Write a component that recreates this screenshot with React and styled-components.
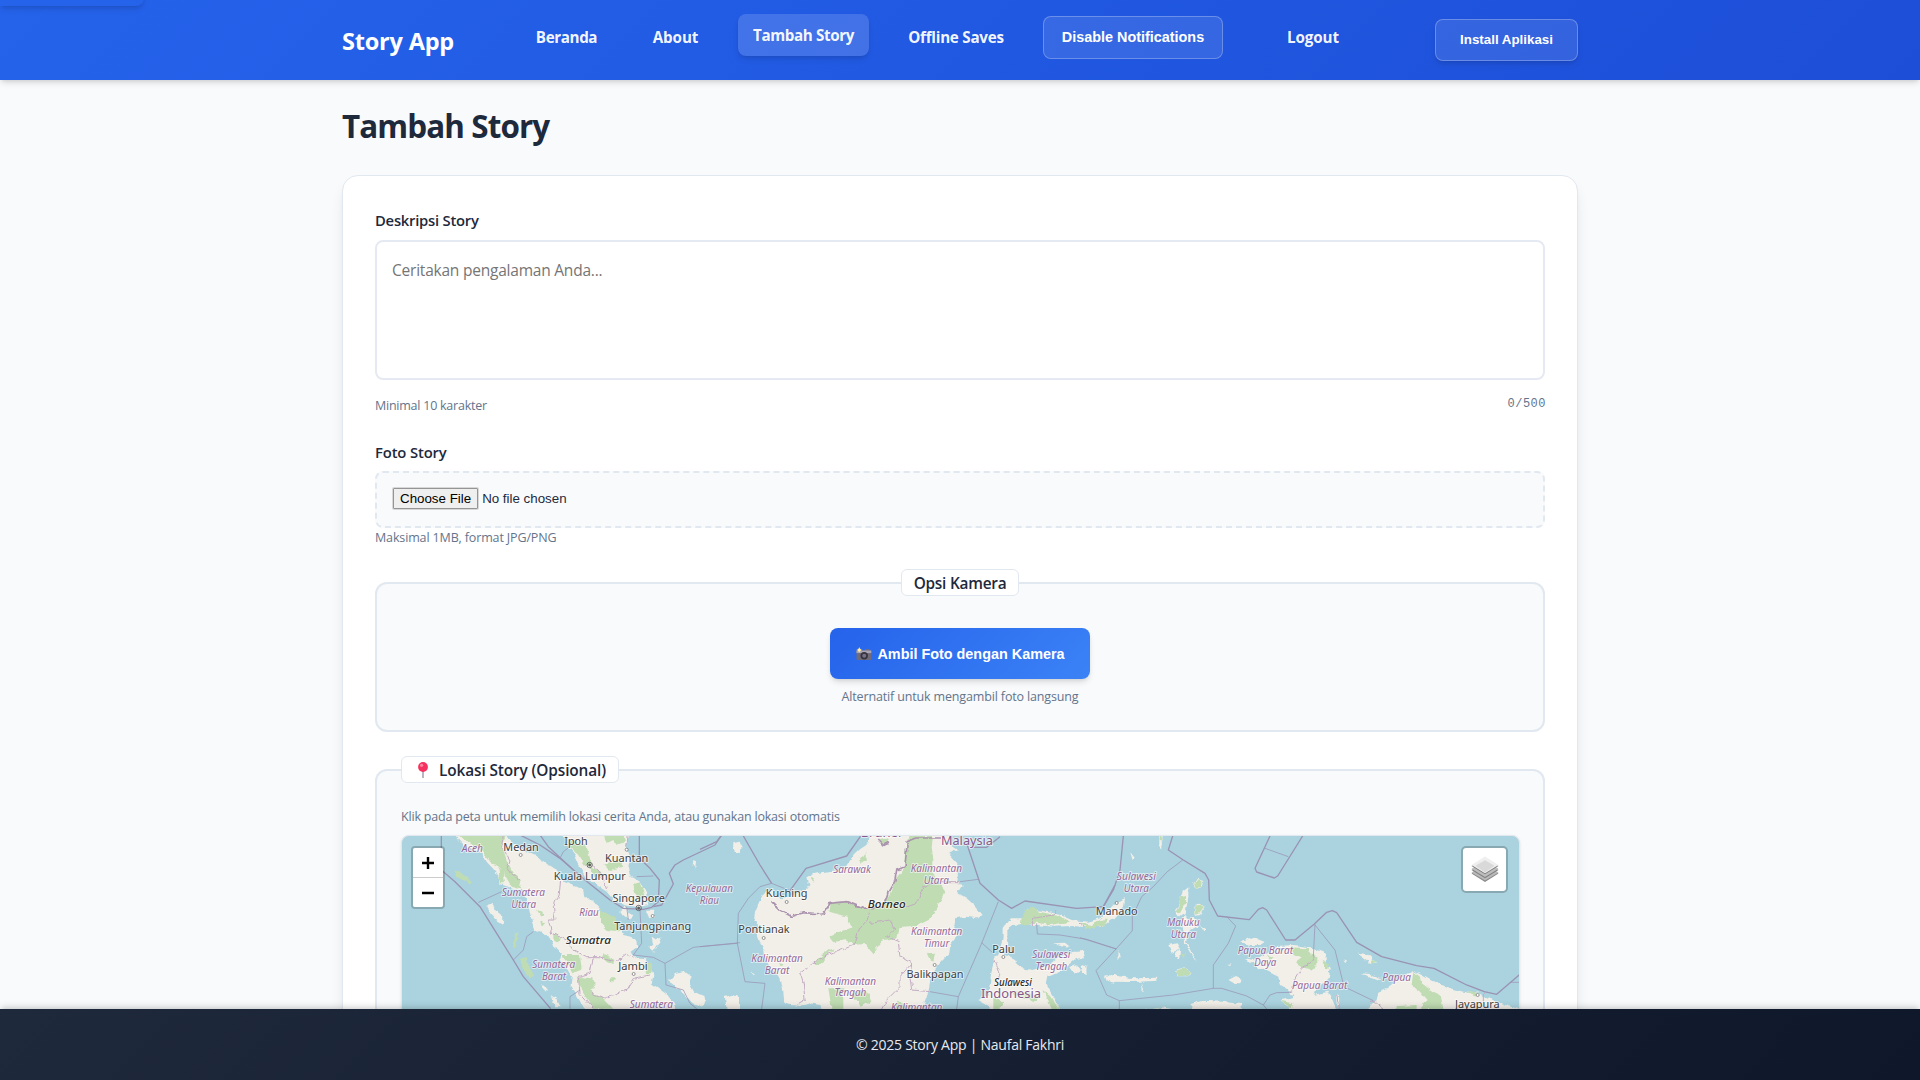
import React from "react";
import styled, { createGlobalStyle } from "styled-components";

const ui = `"Open Sans", "Noto Sans", sans-serif`;
const arial = `"Liberation Sans", Arial, sans-serif`;

const Global = createGlobalStyle`
  *, *::before, *::after { box-sizing: border-box; }
  html, body { margin: 0; padding: 0; overflow: hidden; }
  body { background: #f8fafc; color: #1e293b; font-family: ${ui}; }
`;

const Page = styled.div`
  position: relative;
  display: flex;
  flex-direction: column;
  height: 1080px;
  overflow: hidden;
`;

const SkipLink = styled.a`
  position: absolute;
  z-index: 5;
  top: -38px;
  left: 0;
  width: 144px;
  height: 44px;
  background: #2563eb;
  border-radius: 0 0 8px 0;
  box-shadow: 0 4px 6px -1px rgba(0, 0, 0, 0.12), 0 2px 4px -2px rgba(0, 0, 0, 0.1);
`;

const Header = styled.header`
  flex: none;
  position: relative;
  z-index: 2;
  height: 80px;
  background: linear-gradient(135deg, #2563eb 0%, #1d4ed8 100%);
  box-shadow: 0 4px 6px -1px rgba(0, 0, 0, 0.12), 0 2px 4px -2px rgba(0, 0, 0, 0.1);
`;

const HeaderInner = styled.div`
  display: flex;
  align-items: flex-start;
  width: 1236px;
  margin: 0 auto;
`;

const Brand = styled.div`
  width: 178px;
  padding-top: 23px;
  font-size: 23.5px;
  font-weight: 750;
  letter-spacing: -0.2px;
  line-height: 36px;
  color: #fff;
`;

const Nav = styled.nav`
  display: flex;
  gap: 24px;
  padding-top: 16px;
`;

const NavLink = styled.a`
  display: flex;
  align-items: center;
  justify-content: center;
  width: ${(p) => p.$w}px;
  height: 42px;
  border-radius: 8px;
  font-size: 15.2px;
  font-weight: 660;
  letter-spacing: ${(p) => p.$track ?? -0.2}px;
  color: rgba(255, 255, 255, 0.96);
  ${(p) => p.$active && `
    background: rgba(255, 255, 255, 0.15);
    transform: translateY(-2px);
    box-shadow: 0 4px 6px -1px rgba(0,0,0,.1), 0 2px 4px -2px rgba(0,0,0,.1);
  `}
`;

const GlassButton = styled.button`
  width: ${(p) => p.$w}px;
  height: 43px;
  padding: 0 0 1px;
  border: 1px solid rgba(255, 255, 255, 0.26);
  border-radius: 8px;
  background: rgba(255, 255, 255, 0.1);
  color: #fff;
  font: 700 14.4px ${arial};
  white-space: nowrap;
`;

const InstallButton = styled(GlassButton)`
  height: 42px;
  margin: 19px 0 0 auto;
  font-size: 13.33px;
  box-shadow: 0 4px 6px -1px rgba(0, 0, 0, 0.1), 0 2px 4px -2px rgba(0, 0, 0, 0.1);
`;

const Main = styled.main`
  flex: 1;
  min-height: 0;
  overflow: hidden;
`;

const Container = styled.div`
  width: 1236px;
  margin: 0 auto;
  padding-top: 22px;
`;

const Title = styled.h1`
  margin: 0 0 25px;
  font-size: 31.4px;
  font-weight: 680;
  letter-spacing: -0.9px;
  line-height: 48px;
`;

const Card = styled.section`
  padding: 32px;
  border: 1px solid #e2e8f0;
  border-radius: 16px;
  background: #fff;
  box-shadow: 0 10px 15px -3px rgba(0, 0, 0, 0.1), 0 4px 6px -4px rgba(0, 0, 0, 0.1);
`;

const Label = styled.label`
  display: block;
  height: ${(p) => p.$h}px;
  font-size: 14.8px;
  font-weight: 540;
  line-height: 24px;
  letter-spacing: ${(p) => p.$track}px;
`;

const Area = styled.textarea`
  display: block;
  width: 100%;
  height: 140px;
  padding: 15px 15px;
  border: 2px solid #e5eaf2;
  border-radius: 8px;
  background: #fff;
  color: #1e293b;
  font: 400 15.5px/26px ${ui};
  letter-spacing: -0.22px;
  resize: none;
  outline: none;
  &::placeholder { color: #757575; }
`;

const Hints = styled.div`
  display: flex;
  justify-content: space-between;
  height: 60px;
  padding-top: 15px;
`;

const Hint = styled.div`
  height: ${(p) => p.$h ?? 20}px;
  padding-top: ${(p) => p.$drop ?? 0}px;
  font-size: 12.5px;
  line-height: 20px;
  letter-spacing: ${(p) => p.$track}px;
  color: #64748b;
`;

const Counter = styled.div`
  font: 400 12px/18px "Liberation Mono", "DejaVu Sans Mono", monospace;
  letter-spacing: 0.5px;
  margin-right: -1px;
  color: #64748b;
`;

const FileInput = styled.input`
  display: block;
  width: 100%;
  height: 57px;
  padding: 15px;
  border: 2px dashed #e2e8f0;
  border-radius: 8px;
  background: #f8fafc;
  color: #1e293b;
  font: 400 13.33px ${arial};
  &::file-selector-button {
    height: 21px;
    margin: 0 4px 0 1px;
    padding: 1px 6px;
    border: 1px solid #959595;
    border-radius: 1px;
    background: #efefef;
    box-shadow: 0 0 0 1px #d8d8d8;
    color: #000;
    font: 400 13.33px ${arial};
  }
`;

const Group = styled.fieldset`
  min-width: 0;
  margin: 0 0 24px;
  padding: 0 24px 22px;
  border: 2px solid #e2e8f0;
  border-radius: 12px;
  background: #f8fafc;
`;

const Legend = styled.legend`
  display: flex;
  align-items: center;
  justify-content: center;
  width: ${(p) => p.$w}px;
  height: 27px;
  margin: ${(p) => (p.$center ? "0 auto" : "0")};
  padding: 2px 0 0;
  border: 1px solid #e2e8f0;
  border-radius: 6px;
  background: #fff;
  font-size: 15.4px;
  font-weight: 550;
  letter-spacing: ${(p) => p.$track}px;
  white-space: nowrap;
`;

const CameraBody = styled.div`
  display: flex;
  flex-direction: column;
  align-items: center;
  gap: 8px;
  padding-top: 32px;
`;

const CameraButton = styled.button`
  display: flex;
  align-items: center;
  justify-content: center;
  gap: 5px;
  width: 260px;
  height: 51px;
  padding: 1px 0 0 1px;
  border: 0;
  border-radius: 8px;
  background: linear-gradient(135deg, #2563eb, #3b82f6);
  box-shadow: 0 4px 6px -1px rgba(0, 0, 0, 0.12), 0 2px 4px -2px rgba(0, 0, 0, 0.1);
  color: #fff;
  font: 700 14.4px ${arial};
`;

const LocationBody = styled.div`
  padding-top: 24px;
`;

const Map = styled.div`
  position: relative;
  height: 400px;
  margin: 0 -1px 0 0;
  border: 1px solid #e2e8f0;
  border-radius: 8px;
  overflow: hidden;
  background: #aad3df;
  box-shadow: 0 1px 3px rgba(0, 0, 0, 0.1);
`;

const MapSvg = styled.svg`
  display: block;
  width: 1118px;
  height: 260px;
`;

const Zoom = styled.div`
  position: absolute;
  top: 10px;
  left: 9px;
  border: 2px solid rgba(0, 0, 0, 0.2);
  border-radius: 4px;
  background-clip: padding-box;
`;

const ZoomButton = styled.button`
  display: flex;
  align-items: center;
  justify-content: center;
  width: 30px;
  height: ${(p) => (p.$first ? 30 : 29)}px;
  padding: 0;
  border: 0;
  border-bottom: ${(p) => (p.$first ? "1px solid #ccc" : "0")};
  border-radius: ${(p) => (p.$first ? "2px 2px 0 0" : "0 0 2px 2px")};
  background: #fff;
`;

const Layers = styled.div`
  position: absolute;
  top: 10px;
  right: 11px;
  display: flex;
  align-items: center;
  justify-content: center;
  width: 47px;
  height: 47px;
  border: 2px solid rgba(0, 0, 0, 0.2);
  border-radius: 5px;
  background: #fff;
  background-clip: padding-box;
`;

const Footer = styled.footer`
  flex: none;
  position: relative;
  z-index: 2;
  display: flex;
  align-items: center;
  justify-content: center;
  height: 71px;
  background: linear-gradient(135deg, #1e293b 0%, #0f172a 100%);
  box-shadow: 0 -4px 6px -1px rgba(0, 0, 0, 0.12), 0 -2px 4px -2px rgba(0, 0, 0, 0.1);
  color: #e6eaf0;
  font-size: 14px;
  letter-spacing: -0.25px;
`;

const Place = styled.text`
  font-family: "Noto Sans", "Open Sans", sans-serif;
  font-size: ${(p) => (p.$kind === "country" ? 36 : p.$kind === "province" ? 32.5 : 34.5)}px;
  font-style: ${(p) => (p.$kind === "province" || p.$kind === "island" ? "italic" : "normal")};
  font-weight: ${(p) => (p.$kind === "island" ? 500 : 400)};
  fill: ${(p) => (p.$kind === "province" ? "#93699a" : p.$kind === "country" ? "#85588a" : p.$kind === "island" ? "#2a2a2a" : "#404040")};
  stroke: rgba(255, 255, 255, 0.6);
  stroke-width: 6px;
  stroke-linejoin: round;
  paint-order: stroke;
  text-anchor: middle;
`;

/* [text, centre x, baseline, width, kind] */
const west = [
  ["Aceh", 397, 397, 64, "province"],
  ["Medan", 543, 393, 106, "city"],
  ["Ipoh", 708, 374, 70, "city"],
  ["Kuantan", 860, 426, 130, "city"],
  ["Kuala Lumpur", 749, 479, 216, "city"],
  ["Singapore", 896, 545, 157, "city"],
  ["Tanjungpinang", 938, 631, 231, "city"],
  ["Jambi", 879, 750, 88, "city"],
  ["Sumatra", 745, 673, 136, "island"],
  ["Sumatera", 550, 528, 130, "province"],
  ["Utara", 551, 563, 74, "province"],
  ["Riau", 747, 589, 58, "province"],
  ["Kepulauan", 1108, 517, 142, "province"],
  ["Riau", 1108, 553, 58, "province"],
  ["Sumatera", 641, 745, 129, "province"],
  ["Barat", 642, 780, 72, "province"],
  ["Sumatera", 934, 865, 129, "province"],
];
const middle = [
  ["Brunei", 543, 82, 122, "country"],
  ["Malaysia", 801, 104, 156, "country"],
  ["Sarawak", 456, 188, 113, "province"],
  ["Kalimantan", 709, 185, 154, "province"],
  ["Utara", 709, 221, 75, "province"],
  ["Kuching", 260, 262, 125, "city"],
  ["Borneo", 560, 294, 114, "island"],
  ["Pontianak", 192, 370, 154, "city"],
  ["Kalimantan", 231, 456, 154, "province"],
  ["Barat", 231, 491, 74, "province"],
  ["Kalimantan", 710, 376, 154, "province"],
  ["Timur", 710, 412, 76, "province"],
  ["Balikpapan", 705, 503, 171, "city"],
  ["Kalimantan", 451, 524, 154, "province"],
  ["Tengah", 451, 559, 95, "province"],
  ["Kalimantan", 650, 603, 154, "province"],
  ["Palu", 910, 429, 66, "city"],
  ["Sulawesi", 1054, 445, 114, "province"],
  ["Tengah", 1054, 480, 95, "province"],
  ["Sulawesi", 939, 527, 114, "island"],
  ["Indonesia", 933, 565, 180, "country"],
];
const east = [
  ["Sulawesi", 169, 209, 117, "province"],
  ["Utara", 169, 245, 75, "province"],
  ["Manado", 110, 316, 126, "city"],
  ["Maluku", 310, 348, 98, "province"],
  ["Utara", 310, 384, 75, "province"],
  ["Papua Barat", 556, 432, 166, "province"],
  ["Daya", 556, 468, 66, "province"],
  ["Papua Barat", 719, 538, 166, "province"],
  ["Papua", 950, 513, 86, "province"],
  ["Jayapura", 1192, 595, 134, "city"],
];

const Places = ({ items }) =>
  items.map(([t, x, y, w, k], i) => (
    <Place key={i} x={x} y={y} textLength={w} lengthAdjust="spacingAndGlyphs" $kind={k}>
      {t}
    </Place>
  ));

const Poly = ({ list }) => list.map((p, i) => <polygon key={i} points={p} />);
const Lines = ({ list }) => list.map((p, i) => <polyline key={i} points={p} />);
const Town = ({ at }) =>
  at.map(([x, y], i) => <circle key={i} cx={x} cy={y} r="4.5" fill="#fff" stroke="#666" strokeWidth="2" />);
const Capital = ({ x, y }) => (
  <g fill="none" stroke="#555" strokeWidth="2.5">
    <circle cx={x} cy={y} r="8" />
    <circle cx={x} cy={y} r="3" fill="#555" />
  </g>
);

const WEST = "translate(340 720) scale(.33333)";
const MID = "translate(700 810) scale(.33333)";
const EAST = "translate(1080 810) scale(.33333)";

const landWest = [
  "340,340 360,362 375,378 400,385 425,403 440,425 460,447 478,470 478,492 505,500 520,508 545,510 560,535 570,580 577,610 582,632 610,640 630,655 640,680 665,700 660,720 680,745 695,770 692,795 705,815 720,840 740,880 1030,900 1005,860 990,830 965,812 935,790 940,765 930,740 918,715 880,712 872,695 892,680 888,660 872,650 850,645 840,625 815,622 790,605 780,570 752,535 730,535 726,505 700,498 672,485 655,455 625,435 590,408 545,388 510,365 495,340",
  "665,340 680,375 705,405 715,430 740,475 770,495 800,515 820,540 850,555 895,562 925,555 918,520 900,485 872,468 862,440 868,405 860,375 870,340",
  "985,782 1005,762 1035,755 1055,770 1048,790 1062,815 1090,828 1098,845 1075,858 1058,850 1040,830 1010,802",
  "1155,832 1180,824 1200,835 1200,875 1165,865",
  "438,558 458,552 472,575 490,590 488,612 468,600 452,582",
  "605,792 620,805 618,815 606,802", "632,825 650,838 662,862 648,862", "838,575 855,560 880,590 868,600", "915,572 945,572 945,592 925,595",
  "935,650 950,660 965,655 955,672 940,695 925,682 940,675", "1060,420 1068,424 1066,445 1058,438", "1180,375 1200,365 1200,400 1188,395",
];
const greenWest = [
  "345,340 500,340 485,375 500,420 520,460 545,480 540,505 515,500 480,440 455,430 430,400 400,375",
  "670,340 690,360 740,378 755,440 735,435 710,400 690,385", "790,340 850,340 855,365 830,375 820,360 800,370",
  "475,440 490,450 495,490 480,490", "342,455 360,457 395,483 390,490 350,470", "540,717 560,715 570,745 583,765 570,775 550,755",
  "780,570 820,590 845,635 800,630 780,610", "790,430 840,425 850,440 810,450", "880,495 900,490 915,530 890,540", "750,440 790,465 770,475 750,455",
  "640,640 660,655 655,670 640,660", "665,705 720,705 725,750 700,760 690,740", "710,770 760,775 765,800 745,810 790,835 820,866 760,866 730,820",
  "785,700 820,715 825,735 795,720", "915,725 935,730 935,760 918,760", "810,775 828,775 825,785 808,783", "525,640 535,640 528,685 520,680", "590,570 610,580 605,590", "600,600 615,610 605,620",
];
const landMid = [
  "518,60 505,98 480,115 462,132 440,168 420,180 365,186 340,192 322,200 328,225 318,238 275,256 240,268 218,245 195,243 180,270 165,305 162,330 178,345 172,370 178,395 192,418 198,450 212,475 235,495 245,530 250,575 275,585 300,588 330,580 360,585 380,640 650,640 672,580 685,545 690,520 688,500 705,478 720,460 748,430 752,400 775,372 760,345 765,325 800,320 830,325 848,315 828,290 800,265 775,250 788,228 770,205 772,160 745,130 775,120 745,100 760,60",
  "870,590 835,570 865,555 870,520 875,480 885,445 897,425 908,385 908,355 930,325 968,325 985,295 1040,305 1080,315 1115,330 1165,335 1200,325 1225,300 1250,275 1275,265 1272,290 1240,325 1205,350 1165,352 1120,348 1060,350 1010,345 970,342 940,345 922,360 922,400 915,435 945,450 962,475 1000,480 1040,468 1080,440 1120,425 1148,425 1152,445 1120,452 1080,485 1045,500 1040,525 1060,560 1078,600 1090,640 850,640",
  "100,100 118,95 128,115 112,130 100,118", "75,560 112,558 118,580 110,610 80,600", "0,562 15,580 0,590", "152,488 166,492 158,496",
  "1110,470 1130,462 1140,478 1125,492", "1140,478 1158,478 1160,495 1145,490", "1215,500 1245,495 1260,505 1240,518 1220,512", "1060,400 1095,398 1110,410 1080,405", "1255,420 1262,440 1256,450",
];
const greenMid = [
  "625,78 700,78 695,110 700,150 700,200 735,240 722,272 690,325 640,350 598,355 592,385 545,395 518,430 495,402 462,405 440,390 400,397 385,378 455,352 440,320 388,305 392,280 440,275 490,297 545,290 570,250 585,210 612,175 615,130",
  "978,298 1000,290 1020,305 1075,318 1110,335 1050,345 1010,338 965,348 968,320", "1135,335 1175,345 1200,330 1225,325 1210,348 1165,355",
  "345,455 372,430 400,415 398,425 372,440 370,462 342,462", "385,535 430,535 430,600 395,597", "455,550 500,540 515,570 480,592", "540,90 570,85 560,105 545,105", "480,145 500,130 500,150 485,158",
  "330,200 345,205 340,215", "680,430 705,428 700,455 690,450", "590,575 640,590 590,597", "1030,540 1050,555 1078,600 1055,597", "880,560 910,575 900,597 880,597", "930,545 1015,555 1010,575 960,560", "232,460 250,462 245,470",
];
const landEast = [
  "325,232 308,245 298,275 286,305 298,322 310,312 325,330 340,320 355,345 330,360 318,395 335,425 350,455 330,425 312,392 303,340 318,300 325,262",
  "340,222 352,204 370,210 365,232 350,240", "340,295 355,278 374,290 360,312 345,315",
  "265,405 290,400 300,418 275,430", "290,425 300,420 298,445 285,440", "78,495 110,498 160,505 235,503 232,512 160,516 90,515", "182,520 192,545 185,540", "285,480 310,473 335,488 330,496 290,496",
  "445,510 468,498 490,508 480,520 460,518", "150,125 165,145 158,150", "235,80 248,78 243,120 235,108", "480,395 515,382 550,395 545,405 510,405", "495,445 520,450 530,458 510,460",
  "525,450 565,425 590,408 640,405 690,412 740,432 740,455 752,475 745,510 705,540 700,555 745,545 760,575 775,620 640,640 625,590 600,572 640,560 630,545 600,525 595,500 565,485 528,470",
  "768,552 778,560 776,595 770,580", "830,428 862,432 882,452 892,458 870,458", "835,490 870,492 905,505 895,508", "440,462 458,460 448,466",
  "335,582 370,572 430,575 480,582 490,640 330,640", "200,597 240,590 275,597 275,620 205,620",
  "855,640 862,600 890,570 895,545 920,535 965,500 1000,483 1025,495 1055,512 1110,535 1150,545 1200,552 1250,575 1320,600 1330,640",
  "360,345 382,360 370,360", "790,445 800,450 795,458", "0,420 10,425 5,450 -2,440", "5,465 20,470 18,495 8,490",
];
const greenEast = [
  "342,222 354,206 368,212 362,230 350,238", "342,297 356,282 372,290 358,308 345,312", "302,262 318,258 318,275 300,310 290,305", "285,482 310,475 334,488 328,495 292,495",
  "635,412 680,415 690,432 712,440 712,462 700,480 665,472 645,460 665,445 640,435", "725,450 748,460 745,478 735,472", "558,435 578,440 570,450",
  "1000,484 1020,500 1025,520 1060,545 1082,555 1090,597 1020,597 1040,570 1020,545 995,525", "950,588 1010,585 1010,600 950,600", "870,448 892,455 875,460",
  "237,80 246,80 244,95 236,92", "1160,545 1190,550 1185,558", "600,572 640,580 635,595", "300,432 318,430 314,440", "200,597 240,592 250,600",
];

const MapArt = () => (
  <MapSvg viewBox="402 836 1118 260" aria-hidden="true">
    <defs>
      <filter id="coast" x="-5%" y="-5%" width="110%" height="110%">
        <feTurbulence type="fractalNoise" baseFrequency="0.16" numOctaves="2" seed="4" />
        <feDisplacementMap in="SourceGraphic" scale="5" xChannelSelector="R" yChannelSelector="G" />
      </filter>
    </defs>
    <g filter="url(#coast)">
      <g fill="#f2efe9">
        <g transform={WEST}><Poly list={landWest} /></g>
        <g transform={MID}><Poly list={landMid} /></g>
        <g transform={EAST}><Poly list={landEast} /></g>
      </g>
      <g fill="#bfdcb2">
        <g transform={WEST}><Poly list={greenWest} /></g>
        <g transform={MID}><Poly list={greenMid} /></g>
        <g transform={EAST}><Poly list={greenEast} /></g>
      </g>
      <g fill="none" stroke="#c3abc3" strokeWidth="3">
        <g transform={WEST}>
          <Lines list={[
            "490,340 485,380 510,420 500,450 540,480", "660,470 655,520 640,560 645,600 625,600 635,640 680,660 700,690 740,710 780,710 830,725 860,700 880,715",
            "760,715 750,760 715,770 720,820 760,866", "930,765 880,775 860,810 800,835 750,820", "760,440 790,475 800,510", "865,340 860,380",
          ]} />
        </g>
        <g transform={MID}>
          <Lines list={[
            "510,300 500,335 470,370 462,405 400,430 350,450 300,490 310,520 315,570 290,585", "510,340 570,330 585,360 560,380 595,395 600,440 635,460 600,500 600,530 560,570 545,597",
            "610,295 650,280 670,230 720,215 780,215", "635,460 630,500 635,540 690,545", "885,450 900,490 895,510", "1000,345 1000,325 1060,315 1075,295", "1135,335 1155,350",
          ]} />
        </g>
        <g transform={EAST}>
          <Lines list={["700,440 690,460 665,475 645,510 635,545", "870,570 890,580 910,595", "770,555 778,597", "1213,545 1213,600"]} />
        </g>
      </g>
      <g fill="none" stroke="#ab93ae" strokeWidth="5">
        <g transform={MID}>
          <polyline points="215,275 240,300 275,320 310,308 370,312 390,280 440,275 490,295 550,290 565,245 585,210 590,180 615,170 622,95 650,84 720,84" />
          <polyline points="535,90 550,106 570,95" />
        </g>
      </g>
    </g>
    <g fill="none" stroke="#9a93b3" strokeLinejoin="round">
      <g transform={WEST}>
        <g strokeWidth="4">
          <Lines list={[
            "304,340 304,450 345,485 420,560 520,720 550,770 632,866", "540,345 600,375 660,415 735,480 810,540 850,565 910,568 935,562 955,545 958,480 930,445 898,415 898,340",
            "600,345 625,380 700,450", "1145,345 1125,375 1030,420 1005,435 988,460 1000,492 965,555 940,560",
          ]} />
        </g>
        <g strokeWidth="2.2">
          <Lines list={["415,547 485,515", "520,720 550,690 560,650 580,635", "660,415 670,395 690,380", "890,470 940,468", "860,560 865,600", "900,570 905,670 880,705 940,712 975,730 1060,682 1200,668", "975,730 978,795 1030,810 1050,850 1070,866", "690,866 690,830 720,810"]} />
        </g>
      </g>
      <g transform={MID}>
        <g strokeWidth="4">
          <Lines list={["0,118 50,95 65,75", "130,78 180,165 215,220", "270,242 318,175 440,138 482,78", "800,100 840,220 895,270 935,295 975,273 1130,295 1210,290 1240,240 1245,225", "820,112 860,112 900,80"]} />
        </g>
        <g strokeWidth="2.2">
          <Lines list={["215,220 270,242", "215,220 180,230 145,265 115,310 112,400 135,515 195,520 185,597", "0,410 112,400", "780,215 835,208", "895,275 845,400 775,560 770,597", "690,545 775,560", "845,398 880,430", "1010,340 1012,372 1080,375 1160,388 1250,417"]} />
        </g>
      </g>
      <g transform={EAST}>
        <g strokeWidth="4">
          <Lines list={[
            "70,290 105,225 120,180 130,78", "278,78 265,120 310,150 375,190 386,210 388,270 413,318 508,329 535,298 548,293 560,300 617,390 645,390 703,342 740,307 757,302 770,308 830,397 905,440 1010,467 1062,475 1160,525 1213,545 1250,553 1320,493",
            "570,78 525,175 530,186 583,204 593,198 668,78",
          ]} />
        </g>
        <g strokeWidth="2.2">
          <Lines list={["308,150 262,185 220,230 185,260 157,320 157,362 108,417 48,482 80,555 118,572 118,597", "0,383 108,417", "555,115 625,140", "440,320 467,348 445,400 400,465 400,535 280,555 118,572", "400,535 425,535 500,558 550,585 570,555 590,548 635,547", "705,342 700,440", "705,345 765,420 792,530 880,572", "550,585 560,597", "1290,517 1320,517"]} />
        </g>
      </g>
    </g>
    <g transform={WEST}>
      <Town at={[[542, 405], [860, 389], [938, 588], [881, 762]]} />
      <Capital x={749} y={435} />
      <Capital x={896} y={564} />
      <Places items={west} />
    </g>
    <g transform={MID}>
      <Town at={[[260, 276], [191, 384], [704, 465], [910, 441]]} />
      <Places items={middle} />
    </g>
    <g transform={EAST}>
      <Town at={[[110, 279], [1193, 555]]} />
      <Places items={east} />
    </g>
  </MapSvg>
);

const Camera = () => (
  <svg width="16" height="14" viewBox="0 0 16 14" aria-hidden="true">
    <rect x="9" y="2.2" width="4.5" height="2" fill="#74707c" />
    <rect x="0.5" y="3.5" width="14.8" height="9.5" rx="0.8" fill="#6f6b78" />
    <rect x="0.5" y="3.5" width="14.8" height="2.6" fill="#aaa5b2" />
    <circle cx="8.2" cy="8.8" r="3.7" fill="#36333d" />
    <circle cx="8.2" cy="8.8" r="2" fill="#767088" />
    <path d="M3.3 0l.9 2 2 .9-2 .9-.9 2-.9-2-2-.9 2-.9z" fill="#ffd75e" />
    <circle cx="3.3" cy="2.9" r="1.5" fill="#ffedb0" />
  </svg>
);

const PinSvg = styled.svg`
  margin: -2px 9px 0 2px;
`;

const Pin = () => (
  <PinSvg width="14" height="18" viewBox="0 0 14 18" aria-hidden="true">
    <rect x="6" y="9" width="2" height="8" fill="#b9b3c4" />
    <circle cx="7" cy="6" r="4.9" fill="#f4315f" />
    <circle cx="5.6" cy="4.3" r="1.6" fill="#ff86a2" />
  </PinSvg>
);

const LayersIcon = () => (
  <svg width="28" height="27" viewBox="0 0 28 27" aria-hidden="true">
    <path d="M0.5 17.6L14 9.5l13.5 8.1L14 26z" fill="#8a8a8a" />
    <path d="M0.5 16.4L14 8.3l13.5 8.1L14 24.6z" fill="#b9b9b9" />
    <path d="M0.5 14L14 5.6 27.5 14 14 22.3z" fill="#808080" />
    <path d="M0.5 12.8L14 4.8l13.5 8L14 21z" fill="#bdbdbd" />
    <path d="M0.5 10L14 1.8 27.5 10 14 18.3z" fill="#7d7d7d" />
    <path d="M0.5 8.9L14 0.6l13.5 8.3L14 17.2z" fill="#efefef" />
    <path d="M4.5 9.8L14 4.2l9.5 5.6L14 16.6z" fill="#d9d9d9" />
  </svg>
);

export default function App() {
  return (
    <Page>
      <Global />
      <SkipLink href="#content" aria-label="Skip to content" />
      <Header>
        <HeaderInner>
          <Brand>Story App</Brand>
          <Nav>
            <NavLink $w={93} $track={-0.38}>Beranda</NavLink>
            <NavLink $w={77} $track={-0.1}>About</NavLink>
            <NavLink $w={131} $track={-0.38} $active>Tambah Story</NavLink>
            <NavLink $w={126} $track={-0.25}>Offline Saves</NavLink>
            <GlassButton $w={180}>Disable Notifications</GlassButton>
            <NavLink $w={132} $track={-0.08}>Logout</NavLink>
          </Nav>
          <InstallButton $w={143}>Install Aplikasi</InstallButton>
        </HeaderInner>
      </Header>
      <Main id="content">
        <Container>
          <Title>Tambah Story</Title>
          <Card>
            <Label $h={32} $track={-0.24}>Deskripsi Story</Label>
            <Area placeholder="Ceritakan pengalaman Anda..." />
            <Hints>
              <Hint $drop={1} $track={-0.24}>Minimal 10 karakter</Hint>
              <Counter>0/500</Counter>
            </Hints>
            <Label $h={31} $track={-0.14}>Foto Story</Label>
            <FileInput type="file" />
            <Hint $h={41} $track={-0.14}>Maksimal 1MB, format JPG/PNG</Hint>
            <Group>
              <Legend $w={118} $center $track={-0.24}>Opsi Kamera</Legend>
              <CameraBody>
                <CameraButton><Camera />Ambil Foto dengan Kamera</CameraButton>
                <Hint $h={21} $track={-0.15}>Alternatif untuk mengambil foto langsung</Hint>
              </CameraBody>
            </Group>
            <Group>
              <Legend $w={218} $track={-0.12}><Pin />Lokasi Story (Opsional)</Legend>
              <LocationBody>
                <Hint $h={28} $track={-0.19}>
                  Klik pada peta untuk memilih lokasi cerita Anda, atau gunakan lokasi otomatis
                </Hint>
                <Map>
                  <MapArt />
                  <Zoom>
                    <ZoomButton $first aria-label="Zoom in">
                      <svg width="14" height="14"><path d="M7 1v12M1 7h12" stroke="#000" strokeWidth="2.4" /></svg>
                    </ZoomButton>
                    <ZoomButton aria-label="Zoom out">
                      <svg width="14" height="14"><path d="M1 7h12" stroke="#000" strokeWidth="2.4" /></svg>
                    </ZoomButton>
                  </Zoom>
                  <Layers><LayersIcon /></Layers>
                </Map>
              </LocationBody>
            </Group>
          </Card>
        </Container>
      </Main>
      <Footer>© 2025 Story App | Naufal Fakhri</Footer>
    </Page>
  );
}
